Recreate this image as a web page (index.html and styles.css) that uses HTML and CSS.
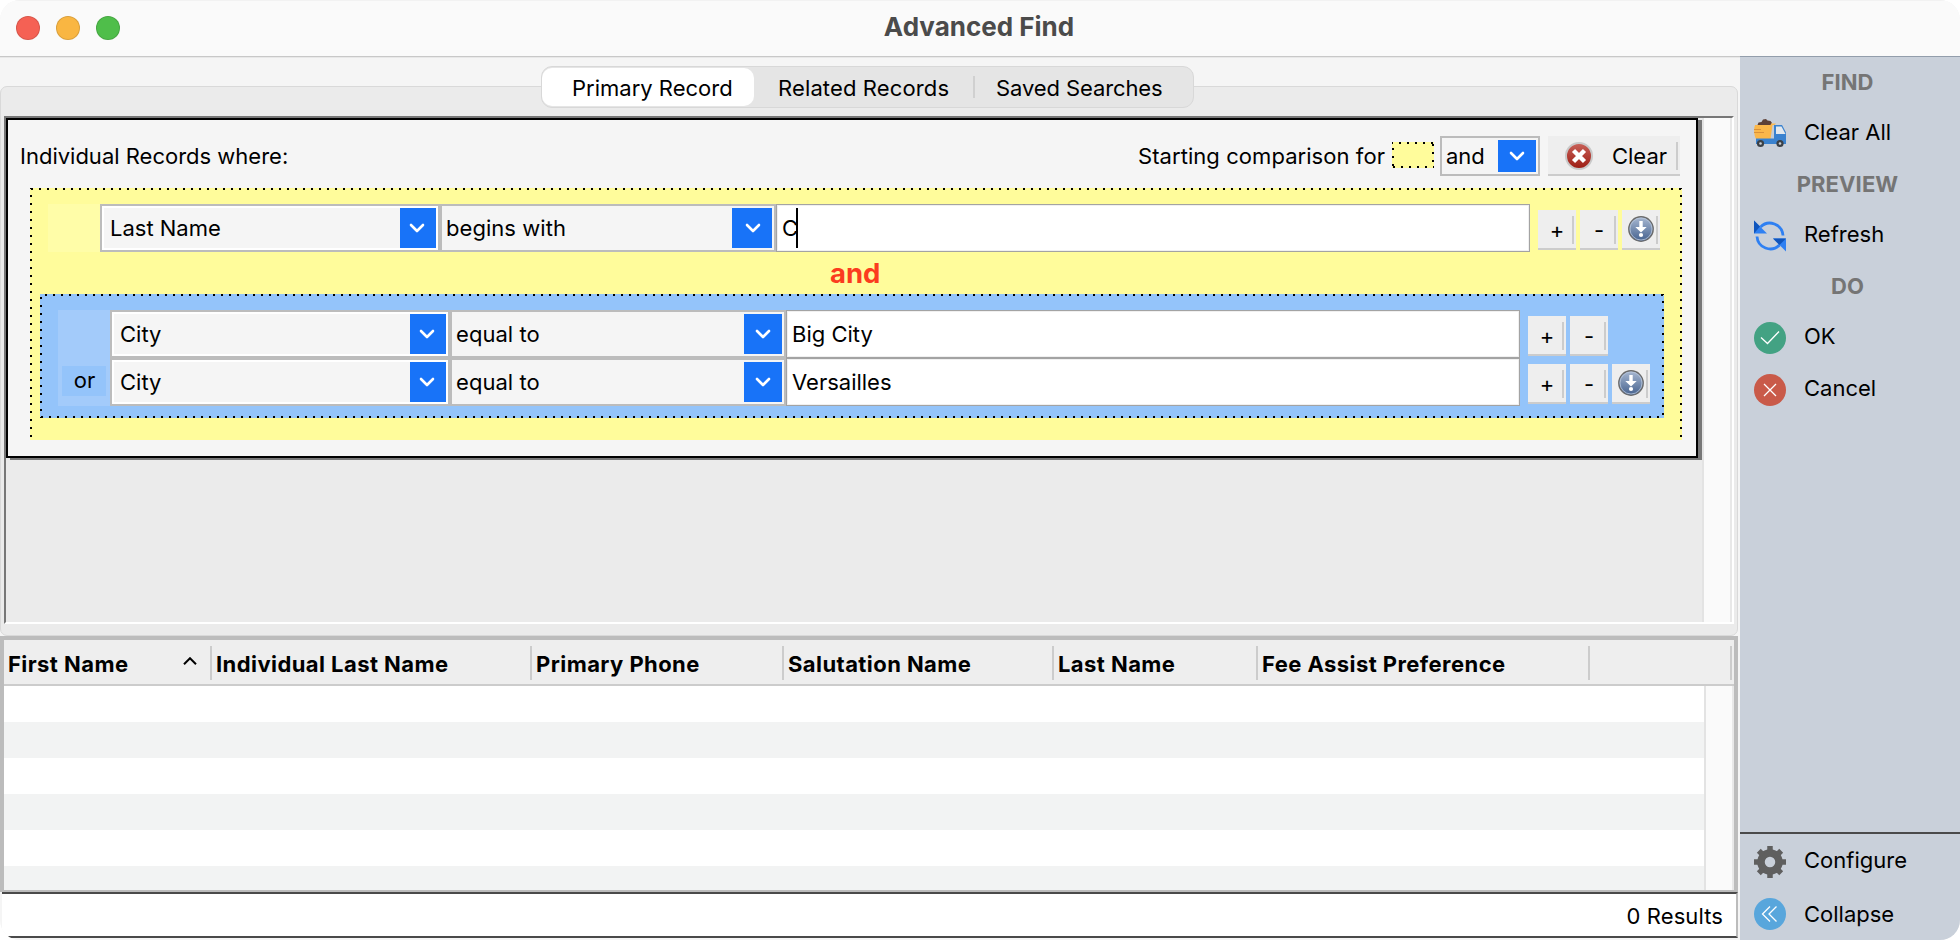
FILE: index.html
```html
<!DOCTYPE html>
<html lang="en">
<head>
    <meta charset="UTF-8">
    <title>Advanced Find</title>
    <link rel="stylesheet" href="styles.css">
</head>
<body>

    <svg class="defs">
        <symbol id="chevron" viewBox="0 0 16 10">
            <path d="M2 2l6 6 6-6" fill="none" stroke="#fff" stroke-width="2.6" stroke-linecap="round" stroke-linejoin="round"/>
        </symbol>
        <linearGradient id="steel" x1="0" y1="0" x2="0" y2="1">
            <stop offset="0" stop-color="#a9b9d2"/>
            <stop offset="1" stop-color="#45628f"/>
        </linearGradient>
        <linearGradient id="red" x1="0" y1="0" x2="0" y2="1">
            <stop offset="0" stop-color="#c9625a"/>
            <stop offset="1" stop-color="#9c1c12"/>
        </linearGradient>
        <symbol id="nest" viewBox="0 0 26 26">
            <circle cx="13" cy="13" r="12.2" fill="url(#steel)" stroke="#6b6b6b" stroke-width="1.4"/>
            <circle cx="13" cy="13" r="11" fill="none" stroke="#b9c6da" stroke-width="0.8"/>
            <path d="M11.3 5h3.4v6h4L13 16.4 7.300 11h4z" fill="#fff"/>
            <circle cx="13" cy="19" r="2.1" fill="#fff"/>
        </symbol>
    </svg>

    <div class="window">
        <!-- Title bar -->
        <div class="titlebar">
            <div class="lights">
                <span class="light close"></span>
                <span class="light minimize"></span>
                <span class="light zoom"></span>
            </div>
            <h1>Advanced Find</h1>
        </div>

        <div class="content">
            <div class="main">
                <!-- Search criteria -->
                <div class="tab-pane">
                    <div class="tabs">
                        <div class="tab active"><span>Primary Record</span></div>
                        <div class="tab related"><span>Related Records</span></div>
                        <div class="tab saved"><span>Saved Searches</span></div>
                    </div>
                    <div class="scroll-area">
                        <div class="viewport">
                            <div class="criteria">
                                <div class="criteria-head">
                                    <span>Individual Records where:</span>
                                    <div class="head-tools">
                                        <span class="starting">Starting comparison for</span>
                                        <span class="swatch"></span>
                                        <div class="combo small">
                                            <span>and</span>
                                            <b class="arrow"><svg><use href="#chevron"/></svg></b>
                                        </div>
                                        <button class="btn clear">
                                            <svg viewBox="0 0 30 30">
                                                <circle cx="15" cy="15" r="13" fill="url(#red)" stroke="#c9c9c9" stroke-width="2"/>
                                                <path d="M9.500 9.500l11 11M20.500 9.500l-11 11" stroke="#fff" stroke-width="4.4"/>
                                            </svg>
                                            <span>Clear</span>
                                        </button>
                                    </div>
                                </div>

                                <div class="group yellow">
                                    <div class="block">
                                        <div class="joiner"></div>
                                        <div class="rows">
                                            <div class="row">
                                                <div class="combo field"><span>Last Name</span><b class="arrow"><svg><use href="#chevron"/></svg></b></div>
                                                <div class="combo operator focused"><span>begins with</span><b class="arrow"><svg><use href="#chevron"/></svg></b></div>
                                                <div class="value">C<i class="caret"></i></div>
                                                <button class="btn">+</button>
                                                <button class="btn">-</button>
                                                <button class="btn"><svg><use href="#nest"/></svg></button>
                                            </div>
                                        </div>
                                    </div>
                                    <div class="connector"><span>and</span></div>
                                    <div class="group blue">
                                        <div class="block">
                                            <div class="joiner"><span>or</span></div>
                                            <div class="rows">
                                                <div class="row">
                                                    <div class="combo field"><span>City</span><b class="arrow"><svg><use href="#chevron"/></svg></b></div>
                                                    <div class="combo operator"><span>equal to</span><b class="arrow"><svg><use href="#chevron"/></svg></b></div>
                                                    <div class="value"><span>Big City</span></div>
                                                    <button class="btn">+</button>
                                                    <button class="btn">-</button>
                                                </div>
                                                <div class="row">
                                                    <div class="combo field"><span>City</span><b class="arrow"><svg><use href="#chevron"/></svg></b></div>
                                                    <div class="combo operator"><span>equal to</span><b class="arrow"><svg><use href="#chevron"/></svg></b></div>
                                                    <div class="value"><span>Versailles</span></div>
                                                    <button class="btn">+</button>
                                                    <button class="btn">-</button>
                                                    <button class="btn"><svg><use href="#nest"/></svg></button>
                                                </div>
                                            </div>
                                        </div>
                                    </div>
                                </div>
                            </div>
                        </div>
                        <div class="scrollbar"></div>
                    </div>
                </div>

                <!-- Results -->
                <div class="results">
                    <div class="table-head">
                        <div class="th"><span>First Name</span>
                            <svg class="sort" viewBox="0 0 14 8"><path d="M1 7.200l6-6 6 6" fill="none" stroke="#000" stroke-width="2"/></svg>
                        </div>
                        <div class="th"><span>Individual Last Name</span></div>
                        <div class="th"><span>Primary Phone</span></div>
                        <div class="th"><span>Salutation Name</span></div>
                        <div class="th"><span>Last Name</span></div>
                        <div class="th"><span>Fee Assist Preference</span></div>
                        <div class="th"></div>
                    </div>
                    <div class="table-body">
                        <div class="stripes"></div>
                        <div class="scrollbar"></div>
                    </div>
                </div>
                <div class="status"><span>0 Results</span></div>
            </div>

            <!-- Action sidebar -->
            <div class="sidebar">
                <h2><span>FIND</span></h2>
                <div class="action">
                    <svg viewBox="0 0 32 32">
                        <path d="M3.500 7l1-2.500 3-.5L9 1.500l3-.5 1.500 1.500 3 .5 1.500 2-1.500 2z" fill="#5d4037"/>
                        <path d="M1 7h17.500l-2.500 14H2C0 17 -.5 11.500 1 7z" fill="#fbb74a"/>
                        <path d="M17 5.500h5l-1.500 1.500L18 21h-3z" fill="#fbb74a"/>
                        <path d="M18.500 7h2v14h-4z" fill="#c3ccd6"/>
                        <path d="M20 7h8l4 7.500V26H20z" fill="#3a82cf"/>
                        <path d="M2 20.500h28V26H2z" fill="#3a82cf"/>
                        <path d="M22 8.500h5.500l4 7.500H22z" fill="#e4e9ee"/>
                        <path d="M0 11.500h7M0 14.500h10" stroke="#d9913a" stroke-width="1.2"/>
                        <circle cx="6.5" cy="25.5" r="3.6" fill="#3b4046"/><circle cx="6.5" cy="25.5" r="1.3" fill="#c9cdd2"/>
                        <circle cx="26" cy="25.5" r="3.6" fill="#3b4046"/><circle cx="26" cy="25.5" r="1.3" fill="#c9cdd2"/>
                    </svg>
                    <span>Clear All</span>
                </div>
                <h2><span>PREVIEW</span></h2>
                <div class="action">
                    <svg viewBox="0 0 32 32">
                        <path d="M6.500 7A13.200 13.200 0 0 1 29 15.500M25.500 25A13.200 13.200 0 0 1 3 16.500" fill="none" stroke="#2f80f2" stroke-width="2.8"/>
                        <path d="M0 .5l13 13H0z" fill="#2f80f2"/><path d="M0 .5l6 6-6 7z" fill="#0f55bd"/>
                        <path d="M32 31.500l-13-13h13z" fill="#2f80f2"/><path d="M19 18.500h13L25.500 25z" fill="#0f55bd"/>
                    </svg>
                    <span>Refresh</span>
                </div>
                <h2><span>DO</span></h2>
                <div class="action">
                    <svg viewBox="0 0 32 32">
                        <circle cx="16" cy="16" r="16" fill="#43a283"/>
                        <path d="M7 15.500l6.500 6L25 9.500" fill="none" stroke="#fff" stroke-width="1.3"/>
                    </svg>
                    <span>OK</span>
                </div>
                <div class="action">
                    <svg viewBox="0 0 32 32">
                        <circle cx="16" cy="16" r="16" fill="#c95a49"/>
                        <path d="M10 10l12 12M22 10L10 22" fill="none" stroke="#fff" stroke-width="1.3"/>
                    </svg>
                    <span>Cancel</span>
                </div>
                <div class="bottom-actions">
                    <div class="action">
                        <svg viewBox="0 0 32 32">
                            <circle cx="16" cy="16" r="9" fill="none" stroke="#5f5f5f" stroke-width="7.5"/>
                            <g stroke="#5f5f5f" stroke-width="5.5">
                                <path d="M16 0v6M16 26v6M0 16h6M26 16h6M4.800 4.800l4 4M23.200 23.200l4 4M4.800 27.200l4-4M23.200 8.800l4-4"/>
                            </g>
                        </svg>
                        <span>Configure</span>
                    </div>
                    <div class="action collapse">
                        <svg viewBox="0 0 32 32">
                            <circle cx="16" cy="16" r="16" fill="#58a6dc"/>
                            <path d="M16 8.500L8.500 16l7.500 7.500M22.500 8.500L15 16l7.500 7.500" fill="none" stroke="#fff" stroke-width="1.3"/>
                        </svg>
                        <span>Collapse</span>
                    </div>
                </div>
            </div>
        </div>
    </div>

</body>
</html>
```
FILE: styles.css
```css
/* General */
* {
    margin: 0;
    padding: 0;
    box-sizing: border-box;
}

body {
    background: #fff;
    font-family: Inter, "Liberation Sans", sans-serif;
    font-size: 22px;
    color: #000;
}

.defs {
    position: absolute;
    width: 0;
    height: 0;
}

.window {
    width: 1960px;
    height: 940px;
    display: flex;
    flex-direction: column;
    border-radius: 20px;
    overflow: hidden;
    background: #f5f5f5;
}

/* Title bar */
.titlebar {
    height: 56px;
    flex: none;
    display: grid;
    grid-template-columns: 1fr auto 1fr;
    align-items: center;
    background: #fafafa;
    box-shadow: inset 0 1px 0 #f2f2f2;
}

.titlebar h1 {
    font-size: 26px;
    font-weight: 700;
    line-height: 30px;
    margin: 0 2px 2px 0;
    color: #4b4b4b;
}

.lights {
    display: flex;
    gap: 16px;
    padding-left: 16px;
}

.light {
    width: 24px;
    height: 24px;
    border-radius: 50%;
    border: 1px solid rgba(0, 0, 0, 0.12);
}

.close { background: #f56154; }
.minimize { background: #f9b642; }
.zoom { background: #4fbe4a; }

/* Layout */
.content {
    flex: 1;
    display: flex;
    min-height: 0;
}

.main {
    width: 1740px;
    display: flex;
    flex-direction: column;
    border-top: 1px solid #c8c8c8;
    box-shadow: inset 0 1px 0 #e8e8e8;
}

/* Tabs */
.tab-pane {
    width: 1738px;
    height: 550px;
    margin-top: 29px;
    border: 1px solid #d9d9d9;
    border-radius: 7px;
    background: #ebebeb;
    padding-left: 3px;
}

.tabs {
    width: 653px;
    height: 42px;
    margin: -21px 0 8px 537px;
    display: flex;
    align-items: center;
    background: #e5e5e5;
    border: 1px solid #d8d8d8;
    border-radius: 11px;
    padding-bottom: 1px;
}

.tab {
    height: 38px;
    padding-top: 2px;
    display: flex;
    align-items: center;
}

.tab.active {
    width: 212px;
    background: #fff;
    border-radius: 10px;
    padding-left: 30px;
}

.tab.related {
    width: 219px;
    padding-left: 24px;
    letter-spacing: 0.13px;
}

.tab.saved {
    height: 22px;
    padding-left: 21px;
    border-left: 2px solid #d0d0d0;
    letter-spacing: -0.1px;
}

/* Scroll area */
.scroll-area {
    width: 1730px;
    height: 508px;
    display: flex;
    border: 2px solid;
    border-color: #777 #fff #fff #777;
}

.viewport {
    width: 1696px;
}

.scrollbar {
    flex: 1;
    background: #fafafa;
    border-left: 2px solid #e3e3e3;
    border-right: 2px solid #e8e8e8;
}

.criteria {
    width: 1692px;
    height: 340px;
    border: 2px solid #000;
    background: #f5f5f5;
    box-shadow: 4px 2px 0 #777;
}

.criteria-head {
    height: 68px;
    display: flex;
    justify-content: space-between;
    padding: 16px 16px 0 12px;
    line-height: 40px;
}

.head-tools {
    height: 40px;
    display: flex;
    align-items: center;
}

.starting {
    margin-right: 7px;
    letter-spacing: 0.06px;
}

.swatch {
    width: 42px;
    height: 26px;
    margin: 0 6px 2px 0;
    background:
        linear-gradient(90deg, #000 2px, transparent 0) 7px 0 / 8px 2px repeat-x,
        linear-gradient(90deg, #000 2px, transparent 0) 1px 100% / 8px 2px repeat-x,
        linear-gradient(#000 2px, transparent 0) 0 6px / 2px 8px repeat-y,
        linear-gradient(#000 2px, transparent 0) 100% 2px / 2px 8px repeat-y,
        #fffc9b;
}

/* Controls */
.combo {
    height: 48px;
    display: flex;
    justify-content: space-between;
    align-items: center;
    border: 2px solid #bcbcbc;
    background: #f5f5f5;
    padding: 2px;
}

.arrow {
    width: 38px;
    height: 100%;
    display: flex;
    align-items: center;
    justify-content: center;
    background: #1873f8;
}

.arrow svg {
    width: 16px;
    height: 10px;
}

.combo.small {
    width: 100px;
    height: 40px;
    padding-left: 4px;
    margin-right: 8px;
}

.combo.field {
    width: 340px;
    padding-left: 8px;
    box-shadow: inset 0 0 0 2px #fff;
}

.combo.field .arrow {
    width: 36px;
    padding-right: 2px;
}

.combo.operator {
    width: 336px;
    padding-left: 4px;
    letter-spacing: 0.05px;
}

.focused .arrow {
    width: 40px;
    padding-left: 2px;
}

.value {
    width: 754px;
    height: 48px;
    margin-right: 8px;
    display: flex;
    align-items: center;
    background: #fff;
    border: 1px solid #a3a3a3;
    box-shadow: inset 0 0 0 1px #f0f0f0;
    padding-left: 5px;
}

.blue .value {
    width: 734px;
}

.caret {
    width: 2px;
    height: 40px;
    background: #000;
    margin-left: -2px;
}

.btn {
    position: relative;
    width: 38px;
    height: 40px;
    margin: 4px 4px 0 0;
    border: none;
    border-bottom: 2px solid #ccc;
    background: #eee;
    font: inherit;
    line-height: 38px;
    padding-top: 2px;
    display: flex;
    align-items: center;
    justify-content: center;
}

.btn::after {
    content: "";
    position: absolute;
    right: 2px;
    top: 6px;
    width: 2px;
    height: 28px;
    background: #ccc;
}

.btn svg {
    width: 26px;
    height: 26px;
    margin-bottom: 2px;
}

.btn.clear {
    width: 132px;
    margin: 0;
    padding-left: 3px;
    gap: 18px;
}

.btn.clear svg {
    width: 30px;
    height: 30px;
    margin: 0;
}

/* Condition groups */
.group {
    padding-top: 16px;
}

.yellow {
    width: 1652px;
    height: 252px;
    margin-left: 22px;
    background:
        linear-gradient(90deg, #000 2px, transparent 0) 1px 0 / 8px 2px repeat-x,
        linear-gradient(#000 2px, transparent 0) 0 7px / 2px 8px repeat-y,
        linear-gradient(#000 2px, transparent 0) 100% 7px / 2px 8px repeat-y,
        #fffc9b;
}

.blue {
    width: 1624px;
    height: 124px;
    margin-left: 10px;
    background:
        linear-gradient(90deg, #000 2px, transparent 0) 5px 0 / 8px 2px repeat-x,
        linear-gradient(90deg, #000 2px, transparent 0) 1px 100% / 8px 2px repeat-x,
        linear-gradient(#000 2px, transparent 0) 0 3px / 2px 8px repeat-y,
        linear-gradient(#000 2px, transparent 0) 100% 7px / 2px 8px repeat-y,
        #94c4fa;
}

.block {
    display: flex;
    margin-left: 18px;
}

.joiner {
    width: 52px;
    background: #fffda8;
}

.blue .joiner {
    background: #a3cbfa;
    padding: 56px 4px 0;
}

.joiner span {
    display: block;
    height: 30px;
    line-height: 28px;
    padding-left: 1px;
    text-align: center;
    background: #94c4fa;
}

.row {
    display: flex;
    align-items: center;
}

.connector {
    height: 42px;
    line-height: 43px;
    padding-left: 800px;
    font-size: 27.5px;
    font-weight: 700;
    color: #fb3c1e;
}

/* Results table */
.results {
    width: 1738px;
    height: 256px;
    border: 4px solid #bcbcbc;
    border-bottom-width: 2px;
    display: flex;
    flex-direction: column;
}

.table-head {
    height: 46px;
    display: grid;
    grid-template-columns: 208px 320px 252px 270px 204px 332px 142px;
    padding: 6px 0;
    background: #eee;
    border-bottom: 2px solid #ccc;
}

.th {
    height: 34px;
    display: flex;
    align-items: center;
    justify-content: space-between;
    padding: 2px 0 0 4px;
    border-right: 2px solid #ccc;
    font-weight: 700;
    letter-spacing: 0.43px;
    white-space: nowrap;
}

.sort {
    width: 14px;
    height: 8px;
    margin: 0 13px 6px 0;
}

.table-body {
    flex: 1;
    display: flex;
}

.stripes {
    width: 1700px;
    background: repeating-linear-gradient(#fff 0 36px, #f2f3f3 36px 72px);
}

.status {
    width: 1736px;
    height: 46px;
    margin-left: 2px;
    display: flex;
    align-items: center;
    justify-content: flex-end;
    padding: 2px 13px 0 0;
    letter-spacing: 0.1px;
    background: #fff;
    border-top: 2px solid #4a4a4a;
    border-bottom: 2px solid #4a4a4a;
    border-right: 2px solid #bcbcbc;
}

/* Sidebar */
.sidebar {
    flex: 1;
    display: flex;
    flex-direction: column;
    background: #c9d0da;
    box-shadow: inset 0 1px 0 #929dab;
}

.sidebar h2 {
    height: 52px;
    line-height: 52px;
    margin: 0 5px -2px 0;
    font-size: 22px;
    font-weight: 700;
    letter-spacing: 0.1px;
    text-align: center;
    color: #757575;
}

.action {
    height: 52px;
    display: flex;
    align-items: center;
    gap: 18px;
    padding-left: 14px;
}

.action svg {
    width: 32px;
    height: 32px;
    margin-top: 4px;
}

.action.collapse {
    padding-top: 3px;
}

.action.collapse svg {
    margin-top: 1px;
}

.bottom-actions {
    margin-top: auto;
    border-top: 2px solid #4a4a4a;
    padding-bottom: 2px;
}
```
